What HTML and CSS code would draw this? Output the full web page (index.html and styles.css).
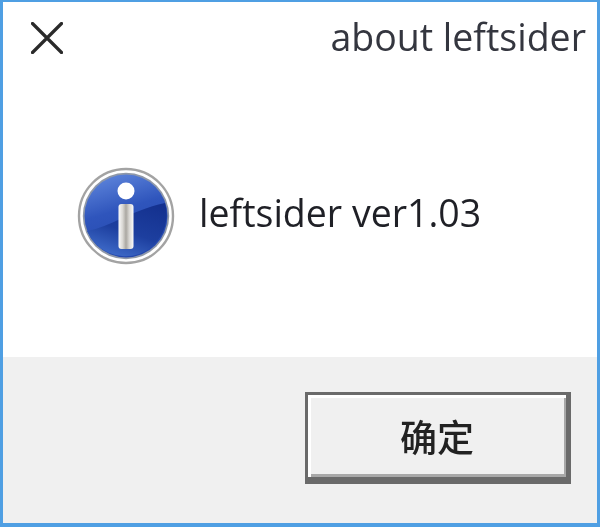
FILE: index.html
```html
<!DOCTYPE html>
<html lang="zh">
<head>
<meta charset="utf-8">
<title>about leftsider</title>
<link rel="stylesheet" href="styles.css">
</head>
<body>
<div class="window">
  <header class="titlebar">
    <svg class="close" viewBox="0 0 32 32" width="32" height="32" aria-hidden="true">
      <path d="M1.5 1.5L30.5 30.5M30.5 1.5L1.5 30.5"/>
    </svg>
    <span class="title">about leftsider</span>
  </header>
  <main class="content">
    <svg class="info" viewBox="0 0 98 98" width="98" height="98" aria-hidden="true">
      <defs>
        <linearGradient id="disc" x1="0.2" y1="0" x2="0.5" y2="1">
          <stop offset="0" stop-color="#5f86dc"/>
          <stop offset="0.45" stop-color="#2f55bc"/>
          <stop offset="1" stop-color="#2347ad"/>
        </linearGradient>
        <linearGradient id="lower" x1="0.8" y1="0" x2="0.3" y2="1">
          <stop offset="0" stop-color="#14318f"/>
          <stop offset="0.55" stop-color="#1d3f9f"/>
          <stop offset="1" stop-color="#3f6cca"/>
        </linearGradient>
        <linearGradient id="stem" x1="0" y1="0" x2="1" y2="0">
          <stop offset="0" stop-color="#fbfbfb"/>
          <stop offset="0.28" stop-color="#d9d7d3"/>
          <stop offset="0.5" stop-color="#aaa7a1"/>
          <stop offset="0.72" stop-color="#d9d7d3"/>
          <stop offset="1" stop-color="#fbfbfb"/>
        </linearGradient>
      </defs>
      <circle cx="49" cy="49" r="47" fill="#fff" stroke="#a3a3a3" stroke-width="2.4"/>
      <circle cx="49" cy="49" r="43.2" fill="#8f98a8"/>
      <circle cx="49" cy="49" r="41.5" fill="url(#disc)"/>
      <path d="M10 64C34 60 52 44 88 36A41.5 41.5 0 0 1 10 64Z" fill="url(#lower)"/>
      <circle cx="49" cy="24" r="8.5" fill="#fff"/>
      <rect x="41.5" y="37" width="15" height="45" rx="3" fill="url(#stem)"/>
    </svg>
    <p class="message">leftsider ver1.03</p>
  </main>
  <footer class="footer">
    <button class="ok" type="button">确定</button>
  </footer>
</div>
</body>
</html>
```
FILE: styles.css
```css
html, body {
  margin: 0;
  padding: 0;
  background: #fff;
}

.window {
  box-sizing: border-box;
  width: 600px;
  height: 527px;
  display: flex;
  flex-direction: column;
  border: 3px solid #4f9fe3;
  border-top-width: 2px;
  border-bottom-width: 4px;
  background: #fff;
  font-family: "Open Sans", "Noto Sans CJK SC", sans-serif;
  color: #222;
  filter: blur(0.7px);
}

.titlebar {
  display: flex;
  justify-content: space-between;
  align-items: center;
  height: 72px;
  padding: 0 11px 0 28px;
}

.close {
  flex: none;
}

.close path {
  fill: none;
  stroke: #2a2a2a;
  stroke-width: 3.2;
  stroke-linecap: round;
}

.title {
  margin-bottom: 3px;
  font-size: 37.5px;
  color: #34363f;
}

.content {
  flex: 1;
  display: flex;
  align-items: center;
  gap: 24px;
  padding: 0 0 0 74px;
}

.info {
  flex: none;
}

.message {
  margin: 0 0 6px;
  font-size: 37.5px;
  color: #1f2026;
}

.footer {
  height: 166px;
  flex: none;
  display: flex;
  justify-content: flex-end;
  align-items: flex-start;
  padding: 35px 26px 0 0;
  box-sizing: border-box;
  background: #f0f0f0;
}

.ok {
  box-sizing: border-box;
  width: 266px;
  height: 92px;
  padding: 0;
  background: #f0f0f0;
  border: 3px solid #6a6a6a;
  border-right-width: 5px;
  border-bottom-width: 7px;
  box-shadow: inset 3px 3px 0 #fff, inset -2px -3px 0 #a8a8a8;
  font-family: "Noto Sans CJK SC", sans-serif;
  font-size: 37px;
  font-weight: 500;
  color: #222;
}
```
